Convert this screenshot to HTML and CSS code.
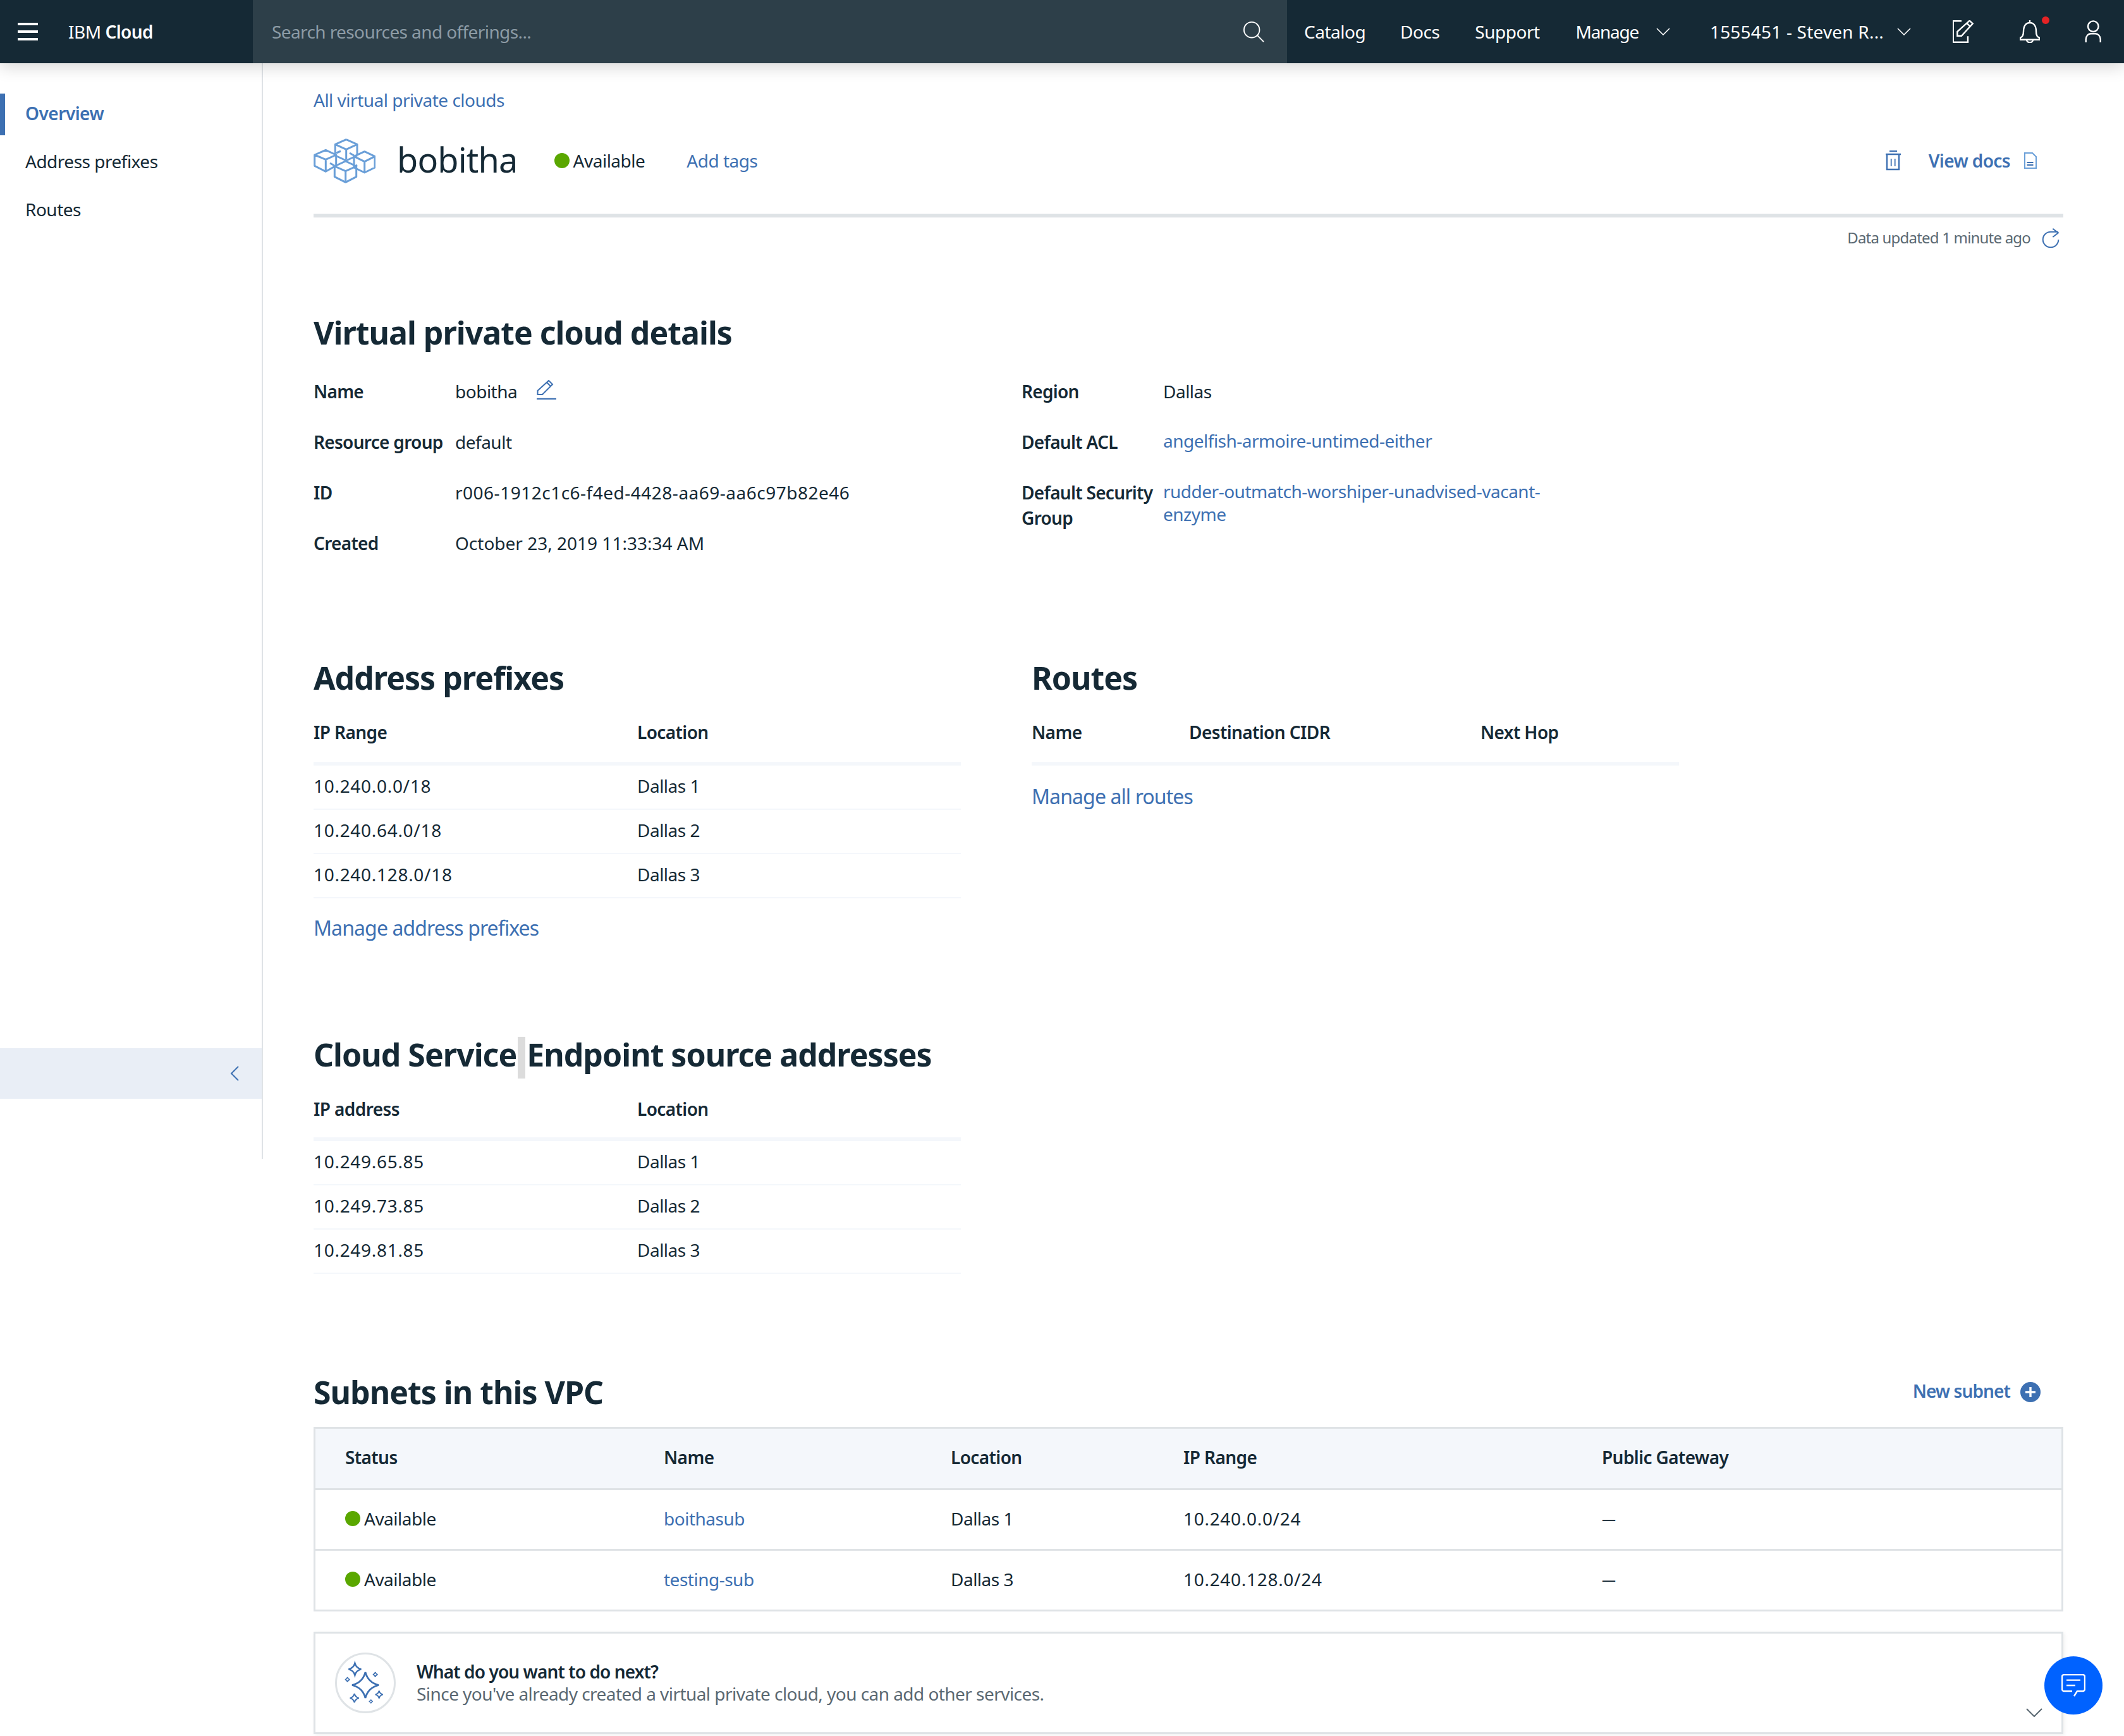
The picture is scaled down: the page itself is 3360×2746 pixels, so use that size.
FILE: index.html
```html
<!DOCTYPE html>
<html lang="en">
<head>
  <meta charset="UTF-8">
  <title>bobitha - IBM Cloud</title>
  <link rel="stylesheet" href="styles.css">
</head>
<body>
  <header class="topbar">
    <div class="brand">
      <svg class="burger" width="32" height="28" viewBox="0 0 32 28"><path d="M0 2h32M0 14h32M0 26h32" stroke="#fff" stroke-width="4"/></svg>
      <span class="brand-name">IBM <b>Cloud</b></span>
    </div>
    <div class="search">
      <span>Search resources and offerings...</span>
      <svg width="34" height="34" viewBox="0 0 36 36" fill="none" stroke="#fff" stroke-width="2"><circle cx="15" cy="15" r="13"/><path d="M24 24l11 11"/></svg>
    </div>
    <nav class="topnav">
      <a class="nav-catalog">Catalog</a>
      <a class="nav-docs">Docs</a>
      <a class="nav-support">Support</a>
      <a class="nav-manage">Manage</a>
      <svg class="chev chev-manage" width="22" height="12" viewBox="0 0 22 12" fill="none" stroke="#fff" stroke-width="1.6"><path d="M1 1l10 10L21 1"/></svg>
      <a class="nav-account">1555451 - Steven R...</a>
      <svg class="chev chev-account" width="22" height="12" viewBox="0 0 22 12" fill="none" stroke="#fff" stroke-width="1.6"><path d="M1 1l10 10L21 1"/></svg>
      <svg class="nav-edit" width="34" height="36" viewBox="0 0 34 36" fill="none" stroke="#fff" stroke-width="2.4"><path d="M14 1.3H.7v33.4H24v-9.4"/><path d="M7.3 24.7V18L26.7.7l5 4.6L14 24.7zM22.3 4.7l5.4 5.3"/></svg>
      <span class="nav-bell">
        <svg width="32" height="36" viewBox="0 0 32 36" fill="none" stroke="#fff" stroke-width="2.4"><path d="M16 0v4M1 30.7v-3c3-1 5-4 5-10C6 9 10 4 16 4s10 5 10 13.7c0 6 2 9 5 10v3zM11 31c0 5.500 10 5.500 10 0"/></svg>
        <i class="red-dot"></i>
      </span>
      <svg class="nav-user" width="28" height="36" viewBox="0 0 28 36" fill="none" stroke="#fff" stroke-width="2.4"><circle cx="13.3" cy="9.7" r="8.3"/><path d="M1.7 35v-5c0-5 4-8.7 8-8.7h7c4 0 8 3.7 8 8.7v5"/></svg>
    </nav>
  </header>

  <div class="layout">
    <aside class="sidenav">
      <a class="side-link active">Overview</a>
      <a class="side-link">Address prefixes</a>
      <a class="side-link">Routes</a>
      <div class="collapse">
        <svg width="14" height="24" viewBox="0 0 14 24" fill="none" stroke="#3d70b2" stroke-width="2"><path d="M13 1L2 12l11 11"/></svg>
      </div>
    </aside>

    <main class="content">
      <a class="link crumb">All virtual private clouds</a>

      <div class="titlebar">
        <svg class="vpc-icon" width="98" height="71" viewBox="0 0 98 71" fill="none" stroke="#6a9fd8" stroke-width="3" stroke-linejoin="round">
          <path d="M51.7 1.700L69 9.300v17.500M34.300 27V9.300l17.400-7.600M34.300 9.300l17.400 8L69 9.300M51.700 17.300V33M34.300 27l17.400 8 17.300-8"/>
          <path d="M19.300 18.300L35.700 26v17l-16.400 9.300L1.700 43.300V26zM1.700 26l17.600 7.300L35.700 26M19.300 33.300v19M36 23l7-3"/>
          <path d="M80.700 20.700L97 28.300v17.700L80.700 54 64 46V28.300zM64 28.300l16.700 8.400 16.300-8.400M80.700 36.700V54M64 27l-7-4M64 45l5-3"/>
          <path d="M50.700 36L67.700 44v16.700L50.700 69.300l-17.400-8.600V44zM33.300 44l17.400 7.700L67.700 44M50.700 51.700v17.600M33 43l-7-4"/>
        </svg>
        <h1 class="vpc-name">bobitha</h1>
        <span class="status title-status"><i class="dot"></i>Available</span>
        <a class="link add-tags">Add tags</a>
        <svg class="trash" width="24" height="32" viewBox="0 0 24 32" fill="none" stroke="#3d70b2" stroke-width="2.4"><path d="M6 1h12M0 6h24M2 6v24h19V6"/><path d="M8.700 13v12M14.700 13v12" stroke-width="1.8"/></svg>
        <a class="link view-docs">View docs</a>
        <svg class="doc" width="20" height="26" viewBox="0 0 20 26" fill="none" stroke="#6a9fd8" stroke-width="2"><path d="M1 1h12l6 6v18H1z"/><path d="M4.500 16h10M4.500 20h10" stroke="#3d70b2"/></svg>
      </div>

      <div class="updated">
        <span>Data updated 1 minute ago</span>
        <svg width="30" height="32" viewBox="0 0 30 32" fill="none" stroke="#3d70b2" stroke-width="2"><path d="M26.300 19a12.300 12.300 0 1 1-12.300-12.300h12M17.300 1.700l8.700 6.600-8.700 6.700"/></svg>
      </div>

      <h2 class="section-title details-title">Virtual private cloud details</h2>
      <section class="details">
        <div class="detail-col">
          <div class="detail-row"><b>Name</b><span>bobitha <svg class="pencil" width="32" height="31" viewBox="0 0 32 31" fill="none" stroke="#3d70b2" stroke-width="2"><path d="M0 30h31" stroke-width="2.4"/><path d="M1.500 23v-6L19 1l6 6L9 23zM16 4l6 6"/></svg></span></div>
          <div class="detail-row"><b>Resource group</b><span>default</span></div>
          <div class="detail-row"><b>ID</b><span class="num-id">r006-1912c1c6-f4ed-4428-aa69-aa6c97b82e46</span></div>
          <div class="detail-row"><b>Created</b><span class="num-date">October 23, 2019 11:33:34 AM</span></div>
        </div>
        <div class="detail-col right">
          <div class="detail-row"><b>Region</b><span>Dallas</span></div>
          <div class="detail-row"><b>Default ACL</b><a class="link">angelfish-armoire-untimed-either</a></div>
          <div class="detail-row"><b>Default Security Group</b><a class="link">rudder-outmatch-worshiper-unadvised-vacant-enzyme</a></div>
        </div>
      </section>

      <div class="two-up">
        <section class="address">
          <h2 class="section-title">Address prefixes</h2>
          <div class="mini-table">
            <div class="mini-head"><b>IP Range</b><b>Location</b></div>
            <div class="mini-row"><span class="num">10.240.0.0/18</span><span>Dallas 1</span></div>
            <div class="mini-row"><span class="num">10.240.64.0/18</span><span>Dallas 2</span></div>
            <div class="mini-row"><span class="num">10.240.128.0/18</span><span>Dallas 3</span></div>
          </div>
          <a class="link manage">Manage address prefixes</a>
        </section>
        <section class="routes">
          <h2 class="section-title">Routes</h2>
          <div class="mini-table">
            <div class="mini-head routes-head"><b>Name</b><b>Destination CIDR</b><b>Next Hop</b></div>
          </div>
          <a class="link manage">Manage all routes</a>
        </section>
      </div>

      <section class="endpoints">
        <h2 class="section-title">Cloud Service<i class="cursor"></i>Endpoint source addresses</h2>
        <div class="mini-table">
          <div class="mini-head"><b>IP address</b><b>Location</b></div>
          <div class="mini-row"><span class="num">10.249.65.85</span><span>Dallas 1</span></div>
          <div class="mini-row"><span class="num">10.249.73.85</span><span>Dallas 2</span></div>
          <div class="mini-row"><span class="num">10.249.81.85</span><span>Dallas 3</span></div>
        </div>
      </section>

      <div class="subnets-head">
        <h2 class="section-title">Subnets in this VPC</h2>
        <a class="link new-subnet">New subnet</a>
        <svg class="plus" width="32" height="32" viewBox="0 0 32 32"><circle cx="16" cy="16" r="16" fill="#3d70b2"/><path d="M16 8v16M8 16h16" stroke="#fff" stroke-width="3.4"/></svg>
      </div>
      <div class="subnets">
        <div class="sub-row sub-header"><b>Status</b><b>Name</b><b>Location</b><b>IP Range</b><b>Public Gateway</b></div>
        <div class="sub-row"><span class="status"><i class="dot"></i>Available</span><a class="link">boithasub</a><span>Dallas 1</span><span class="num">10.240.0.0/24</span><span class="dash">—</span></div>
        <div class="sub-row"><span class="status"><i class="dot"></i>Available</span><a class="link">testing-sub</a><span>Dallas 3</span><span class="num">10.240.128.0/24</span><span class="dash">—</span></div>
      </div>

      <div class="next-box">
        <svg class="next-icon" width="96" height="96" viewBox="5.300 5.300 96 96" fill="none" stroke="#3d70b2">
          <defs><path id="star" vector-effect="non-scaling-stroke" d="M0-1Q.2-.2 1 0Q.2.2 0 1Q-.2.2-1 0Q-.2-.2 0-1z"/></defs>
          <circle cx="53.300" cy="53.300" r="46.500" stroke="#dfe3e6" stroke-width="3"/>
          <use href="#star" transform="translate(53.300 56.800) scale(21 20.500)" stroke-width="2.800"/>
          <use href="#star" transform="translate(36.700 31.700) scale(10 9.500)" stroke-width="2.400"/>
          <use href="#star" transform="translate(36 77.300) scale(7 7)" stroke-width="2"/>
          <use href="#star" transform="translate(75 71.700) scale(6 6)" stroke-width="2"/>
          <use href="#star" transform="translate(69 40) scale(3.800 3.800)" stroke-width="1.600"/>
          <use href="#star" transform="translate(25 48) scale(3.800 3.800)" stroke-width="1.600"/>
          <use href="#star" transform="translate(62 82.700) scale(3 3)" stroke-width="1.400"/>
        </svg>
        <div class="next-text">
          <b>What do you want to do next?</b>
          <span>Since you've already created a virtual private cloud, you can add other services.</span>
        </div>
        <svg class="next-chev" width="26" height="14" viewBox="0 0 26 14" fill="none" stroke="#5a6872" stroke-width="2"><path d="M1 1l12 12L25 1"/></svg>
      </div>
    </main>
  </div>

  <button class="chat">
    <svg width="38" height="36" viewBox="0 0 38 36" fill="none" stroke="#fff" stroke-width="2.4"><path d="M17 27H4a3 3 0 0 1-3-3V4a3 3 0 0 1 3-3h30a3 3 0 0 1 3 3v20a3 3 0 0 1-3 3h-9l-5 8"/><path d="M8 9.600h22M8 18h14"/></svg>
  </button>
</body>
</html>
```

FILE: styles.css
```css
html, body {
  margin: 0;
  height: 2746px;
  overflow: hidden;
  background: #fff;
}

body {
  font-family: "Noto Sans", sans-serif;
  font-size: 28px;
  line-height: 40px;
  letter-spacing: -0.5px;
  color: #152935;
  position: relative;
}

b { font-weight: 600; letter-spacing: -0.6px; }

h1, h2 { margin: 0; }

.link { color: #3d70b2; }
.num { letter-spacing: 0.7px; }
.num-id { letter-spacing: 0.5px; }
.num-date { letter-spacing: 0; }
.dash { font-size: 22px; }

/* top bar */
.topbar {
  display: flex;
  height: 100px;
  background: #152935;
  color: #fff;
  position: relative;
  z-index: 5;
  box-shadow: 0 6px 24px rgba(0,0,0,0.16);
}

.brand {
  width: 400px;
  display: flex;
  align-items: center;
  padding-left: 28px;
  box-sizing: border-box;
}

.brand-name { margin-left: 48px; }

.search {
  width: 1636px;
  background: #2d3f49;
  color: #8c9ba5;
  letter-spacing: -0.6px;
  display: flex;
  align-items: center;
  justify-content: space-between;
  padding: 0 36px 0 30px;
  box-sizing: border-box;
}

.topnav {
  flex: 1;
  display: flex;
  align-items: center;
  padding-left: 27px;
}

.nav-docs { margin-left: 55px; }
.nav-support { margin-left: 56px; }
.nav-manage { margin-left: 57px; letter-spacing: -1.3px; }
.chev-manage { margin-left: 28px; }
.nav-account { margin-left: 63px; letter-spacing: 0.2px; }
.chev-account { margin-left: 21px; }
.nav-edit { margin-left: 66px; }
.nav-bell { margin-left: 72px; position: relative; display: flex; }
.nav-user { margin-left: 71px; }

.red-dot {
  position: absolute;
  top: -6px;
  right: -15px;
  width: 12px;
  height: 12px;
  border-radius: 50%;
  background: #e62325;
}

/* side nav + content */
.layout { display: flex; align-items: flex-start; }

.sidenav {
  width: 416px;
  height: 1733px;
  box-sizing: border-box;
  border-right: 2px solid #dfe3e6;
  padding-top: 48px;
  flex-shrink: 0;
  position: relative;
}

.side-link {
  display: block;
  height: 76px;
  line-height: 62px;
  padding-left: 40px;
}

.side-link.active {
  color: #3d70b2;
  font-weight: 600;
  box-shadow: inset 8px 0 0 #3d70b2;
  height: 66px;
  margin-bottom: 10px;
}

.collapse {
  position: absolute;
  top: 1558px;
  left: 0;
  right: 0;
  height: 80px;
  background: #e9eef6;
  display: flex;
  align-items: center;
  justify-content: flex-end;
  padding-right: 36px;
}

.content {
  flex: 1;
  padding: 38px 96px 0 80px;
}

.crumb { display: block; }

.titlebar {
  display: flex;
  align-items: center;
  height: 100px;
  margin-top: 26px;
}

.vpc-name {
  font-size: 54px;
  font-weight: 400;
  line-height: 96px;
  letter-spacing: -0.8px;
  margin-left: 34px;
  padding-bottom: 4px;
}

.status { display: inline-flex; align-items: center; }
.title-status { margin-left: 58px; }

.dot {
  width: 24px;
  height: 24px;
  border-radius: 50%;
  background: #5aa700;
  margin-right: 6px;
}

.add-tags { margin-left: 66px; }
.trash { margin-left: auto; }
.view-docs { margin-left: 44px; font-weight: 600; letter-spacing: -0.6px; }
.doc { margin-left: 22px; margin-right: 42px; }

.updated {
  border-top: 6px solid #dfe3e6;
  margin-top: 34px;
  padding: 16px 4px 0 0;
  display: flex;
  justify-content: flex-end;
  align-items: center;
  gap: 18px;
  height: 32px;
  font-size: 24px;
  letter-spacing: -0.8px;
  color: #5a6872;
}

.section-title {
  font-size: 50px;
  line-height: 64px;
  font-weight: 700;
  letter-spacing: -1px;
}

.details-title { margin-top: 102px; }

.details {
  display: flex;
  margin-top: 20px;
  height: 322px;
}

.detail-col { width: 1120px; }
.detail-col.right { width: 1000px; }

.detail-row {
  display: flex;
  height: 80px;
  padding-top: 21px;
  box-sizing: border-box;
}

.detail-row b { width: 224px; flex-shrink: 0; letter-spacing: -0.7px; }
.detail-row .link { width: 640px; line-height: 36px; }

.pencil { margin-left: 24px; vertical-align: -2px; }

.two-up {
  display: flex;
  margin-top: 140px;
}

.address { width: 1024px; margin-right: 112px; }
.routes { width: 1024px; }

.mini-table { width: 1024px; }

.mini-head {
  display: grid;
  grid-template-columns: 512px 1fr;
  padding: 34px 0 27px;
  border-bottom: 6px solid #f4f7fb;
}

.endpoints .mini-head { padding-bottom: 25px; }

.routes-head { grid-template-columns: 249px 461px 1fr; }

.mini-row {
  display: grid;
  grid-template-columns: 512px 1fr;
  height: 70px;
  box-sizing: border-box;
  padding-top: 12px;
  border-bottom: 2px solid #f4f7fb;
}

.manage {
  display: block;
  font-size: 32px;
  line-height: 44px;
  letter-spacing: -0.9px;
  margin-top: 25px;
}

.routes .manage { margin-top: 27px; }

.endpoints { margin-top: 146px; }

.cursor {
  display: inline-block;
  width: 12px;
  height: 66px;
  margin: -10px 2px -10px 2px;
  vertical-align: middle;
  background: #dcdcdc;
}

.subnets-head {
  display: flex;
  align-items: center;
  margin-top: 155px;
}

.subnets-head .section-title { flex: 1; }

.new-subnet { font-weight: 600; letter-spacing: -0.9px; padding-bottom: 4px; }
.plus { margin: 0 36px 0 16px; }

.subnets {
  border: 3px solid #dfe3e6;
  margin-top: 23px;
}

.sub-row {
  display: grid;
  grid-template-columns: 504px 454px 368px 662px 1fr;
  align-items: center;
  height: 89px;
  padding: 0 0 4px 47px;
  border-bottom: 3px solid #dfe3e6;
}

.sub-row:last-child { border-bottom: 0; }
.sub-header { background: #f4f7fb; height: 90px; }

.next-box {
  display: flex;
  align-items: center;
  border: 3px solid #dfe3e6;
  margin-top: 32px;
  height: 156px;
  padding-left: 31px;
  position: relative;
  box-shadow: 2px 2px 6px rgba(0,0,0,0.06);
}

.next-text {
  display: flex;
  flex-direction: column;
  margin-left: 33px;
  line-height: 35px;
  letter-spacing: -0.55px;
}

.next-text b { letter-spacing: -0.9px; }
.next-text span { color: #5a6872; }

.next-chev {
  position: absolute;
  right: 30px;
  bottom: 24px;
}

.chat {
  position: absolute;
  left: 3234px;
  top: 2620px;
  width: 92px;
  height: 92px;
  padding: 0;
  border: 0;
  border-radius: 50%;
  background: #0062ff;
  display: flex;
  align-items: center;
  justify-content: center;
  z-index: 6;
}
```
